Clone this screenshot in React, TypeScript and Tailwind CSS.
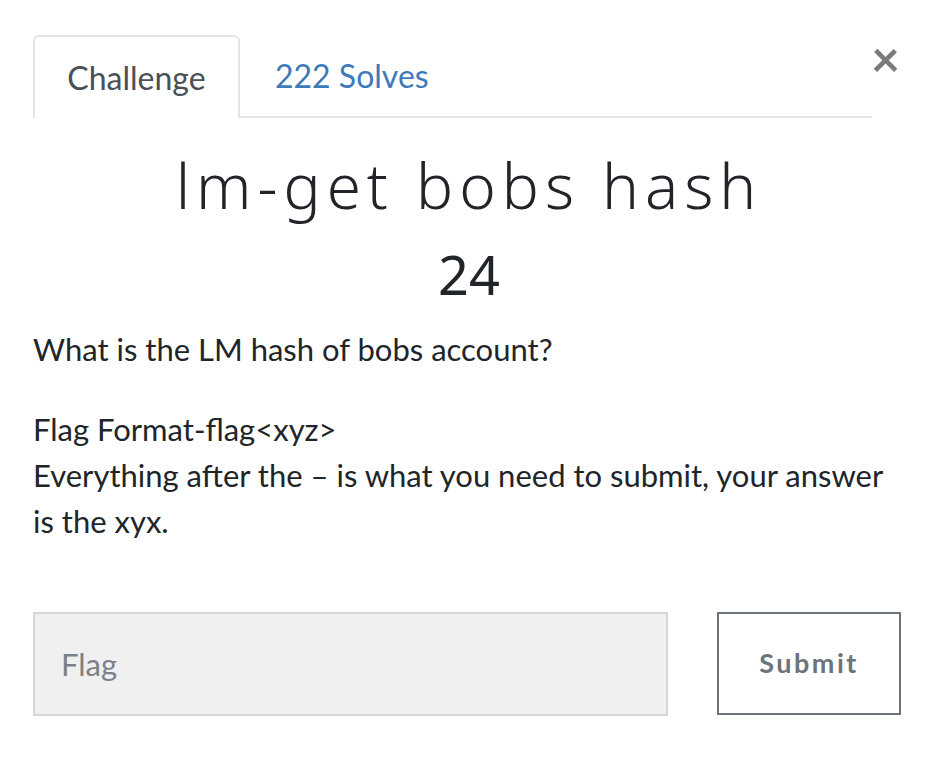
import React from "react";

export default function App() {
  return (
    <div className="w-[938px] h-[764px] bg-white relative" style={{ fontFamily: "Lato, 'Noto Sans', sans-serif" }}>
      <button className="absolute left-[871px] top-[33px] text-[50px] leading-none font-bold text-[#7a7a7a]">×</button>
      <div className="pt-[35px] pl-[33px] pr-[66px]">
        <div className="flex border-b-2 border-[#e1e4e8] h-[83px]">
          <div className="w-[207px] h-[83px] -mb-[2px] bg-white border-2 border-b-0 border-[#e1e4e8] rounded-t-[6px] flex items-center justify-center text-[32px] text-[#495057]">
            Challenge
          </div>
          <div className="pl-[35px] flex items-center text-[32px] text-[#3d7ab8]">222 Solves</div>
        </div>
      </div>
      <div className="px-[33px]">
        <h1 className="text-center text-[62px] leading-none mt-[36px] text-[#212529] font-light tracking-[6px]" style={{ fontFamily: "'Noto Sans', sans-serif" }}>
          lm-get bobs hash
        </h1>
        <div className="text-center text-[54px] leading-none mt-[31px] text-[#212529]" style={{ fontFamily: "'Noto Sans', sans-serif" }}>
          24
        </div>
        <div className="mt-[25px] text-[31px] leading-[46px] text-[#212529]">
          <p className="mb-[34px]">What is the LM hash of bobs account?</p>
          <p>
            Flag Format-flag&lt;xyz&gt;
            <br />
            Everything after the – is what you need to submit, your answer is the xyx.
          </p>
        </div>
        <div className="mt-[68px] flex gap-[49px]">
          <div className="w-[635px] h-[104px] bg-[#f0f0f0] border-2 border-[#d3d8dd] flex items-center pl-[26px] text-[31px] text-[#7b8188]">
            Flag
          </div>
          <div className="w-[184px] h-[103px] border-2 border-[#6c737a] flex items-center justify-center text-[27px] font-bold tracking-[2.5px] text-[#6c737a]">
            Submit
          </div>
        </div>
      </div>
    </div>
  );
}
